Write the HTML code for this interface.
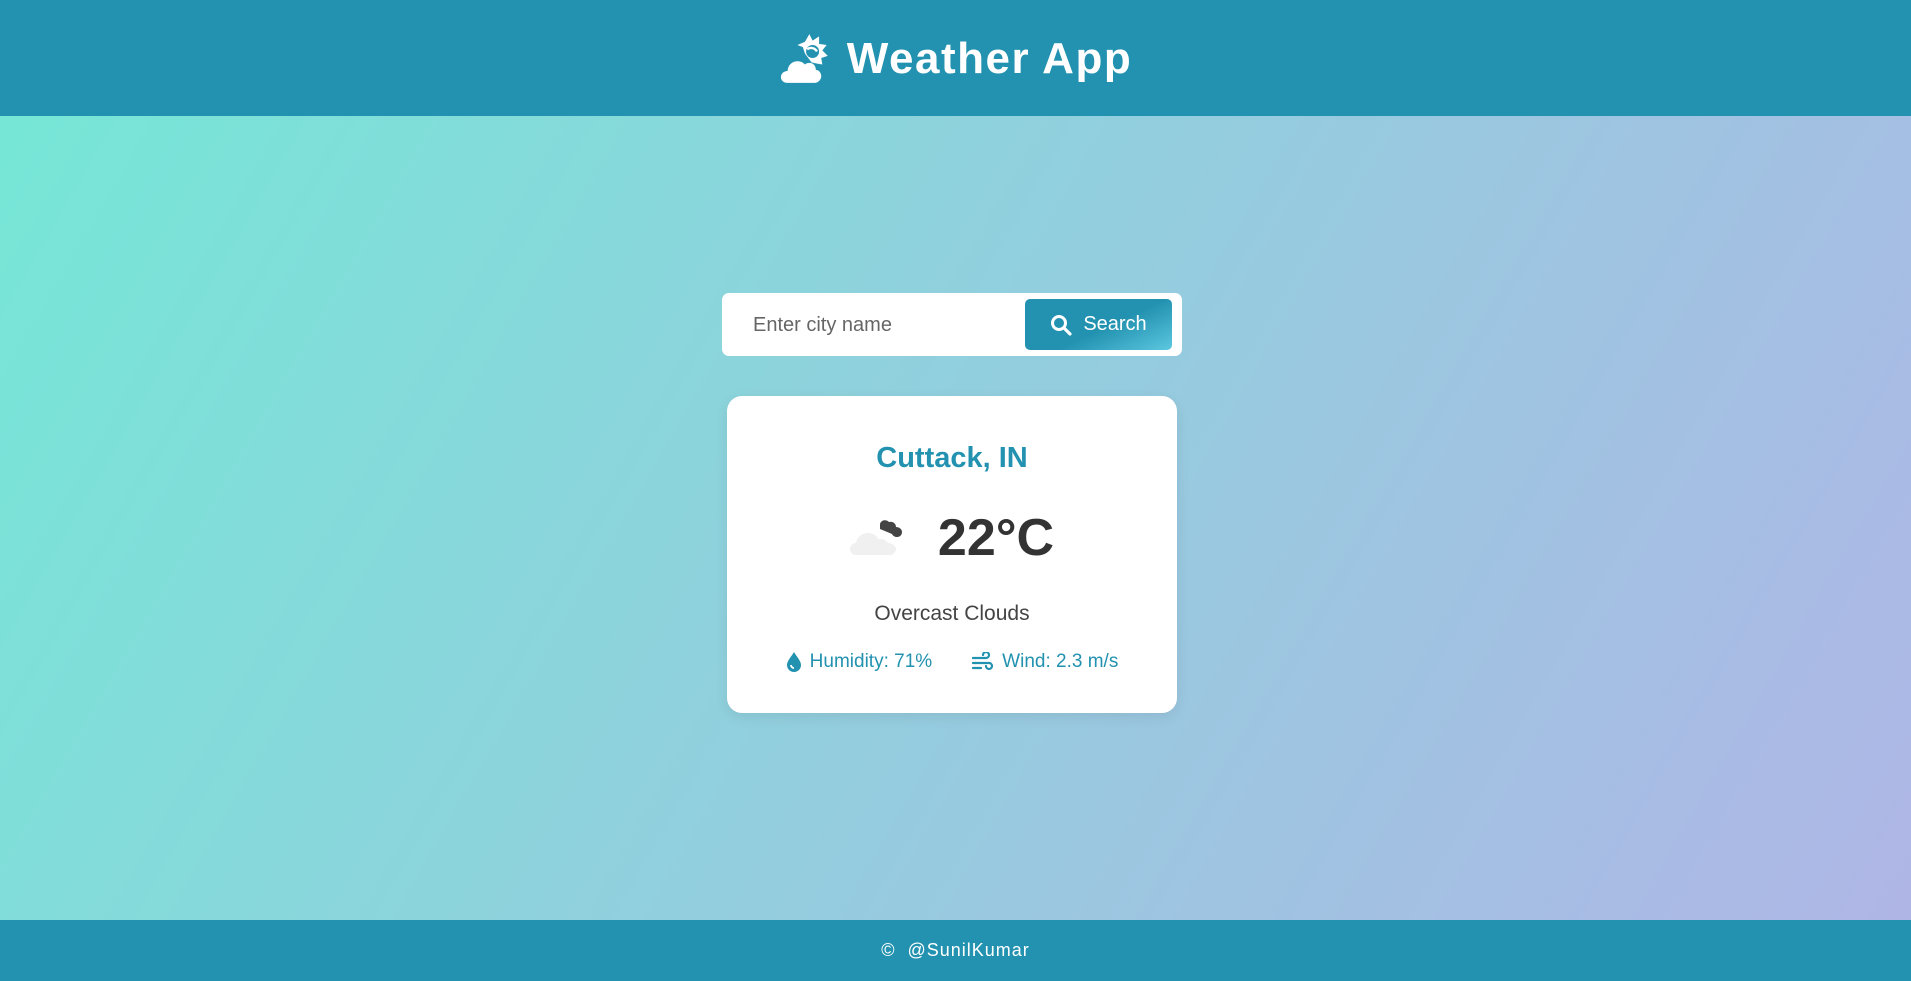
<!DOCTYPE html>
<html><head><meta charset="utf-8"><style>
*{margin:0;padding:0;box-sizing:border-box}
html,body{width:1911px;height:981px;overflow:hidden}
body{font-family:"Liberation Sans",sans-serif;background:linear-gradient(120deg,#74e8d6 0%,#93cede 50%,#b0b5e6 100%);position:relative}
header{position:absolute;top:0;left:0;width:1911px;height:116px;background:#2292b0;display:flex;align-items:center;justify-content:center;color:#fff}
header h1{font-size:44px;font-weight:bold;letter-spacing:1.5px;margin-left:16px;margin-top:2px}
footer{position:absolute;bottom:0;left:0;width:1911px;height:61px;background:#2292b0;color:#fff;display:flex;align-items:center;justify-content:center;font-size:18px;letter-spacing:1px}
.search{position:absolute;left:722px;top:293px;width:460px;height:63px;background:#fff;border-radius:7px}
.search span{position:absolute;left:31px;top:21px;font-size:20px;color:#666}
.btn{position:absolute;left:303px;top:6px;width:147px;height:51px;border-radius:5px;background:linear-gradient(155deg,#2292b0 0%,#2292b0 55%,#5cc7e0 100%);color:#fff;font-size:20px;display:flex;align-items:center;justify-content:center;gap:11px}
.card{position:absolute;left:727px;top:396px;width:450px;height:317px;background:#fff;border-radius:15px;box-shadow:0 4px 14px rgba(0,0,0,.08);text-align:center}
.city{position:absolute;top:46px;width:100%;font-size:29px;font-weight:bold;color:#2292b0}
.temp{position:absolute;top:112px;left:0;width:100%;display:flex;justify-content:center;align-items:center;gap:30px}
.temp b{font-size:52px;color:#333}
.desc{position:absolute;top:206px;width:100%;font-size:21px;color:#444}
.det{position:absolute;top:255px;width:100%;display:flex;justify-content:center;gap:40px;font-size:19px;color:#2292b0}
.det div{display:flex;align-items:center;gap:8px}
</style></head><body>
<header>
<svg width="52" height="50" viewBox="0 0 48 46"><g fill="#fff"><polygon points="28,1 31,7 37,3 37,10 44,11 40,16 45,21 39,23 40,29 34,28 30,27 24,19 22,13 17,11 24,8"/><circle cx="31" cy="17" r="6" fill="#2292b0"/><path d="M26 15a6 6 0 0 1 9 2" stroke="#fff" stroke-width="2.2" fill="none"/><path d="M8 46c-5 0-7-4-6-7 1-3 4-4 6-4 0-5 4-9 9-9 3 0 5 1 7 3 2-2 6-2 8 0 2 2 2 4 2 5 3 0 5 3 5 6s-3 6-6 6z"/></g></svg>
<h1>Weather App</h1>
</header>
<div class="search"><span>Enter city name</span>
<div class="btn"><svg width="22" height="22" viewBox="0 0 22 22"><circle cx="9" cy="9" r="6.5" stroke="#fff" stroke-width="3" fill="none"/><path d="M14 14l6 6" stroke="#fff" stroke-width="3.2" stroke-linecap="round"/></svg>Search</div></div>
<div class="card">
<div class="city">Cuttack, IN</div>
<div class="temp"><svg width="58" height="40" viewBox="0 0 58 40"><g fill="#444"><path d="M30 6c1-4 6-5 9-2 3-1 7 1 7 5 3 0 6 2 6 5s-2 5-5 5c-2 0-4-1-5-3l-12-5z"/></g><path d="M6 37c-4 0-6-3-6-6s3-6 6-6c1-6 6-10 12-10 5 0 9 3 10 6 4-1 8 1 10 4 4 0 8 3 8 6s-3 6-6 6z" fill="#f0f0f0"/></svg><b>22°C</b></div>
<div class="desc">Overcast Clouds</div>
<div class="det"><div><svg width="16" height="22" viewBox="0 0 16 22"><path d="M8 1C5 6 1 10 1 14a7 7 0 0 0 14 0C15 10 11 6 8 1z" fill="#2292b0"/><path d="M5 14a3 3 0 0 0 3 3" stroke="#fff" stroke-width="1.8" fill="none"/></svg>Humidity: 71%</div>
<div><svg width="22" height="20" viewBox="0 0 22 20"><g stroke="#2292b0" stroke-width="2.2" fill="none" stroke-linecap="round"><path d="M1 6h13a3 3 0 1 0-3-3"/><path d="M1 11h16a3 3 0 1 1-3 3"/><path d="M1 16h8"/></g></svg>Wind: 2.3 m/s</div></div>
</div>
<footer>©&nbsp; @SunilKumar</footer>
</body></html>
